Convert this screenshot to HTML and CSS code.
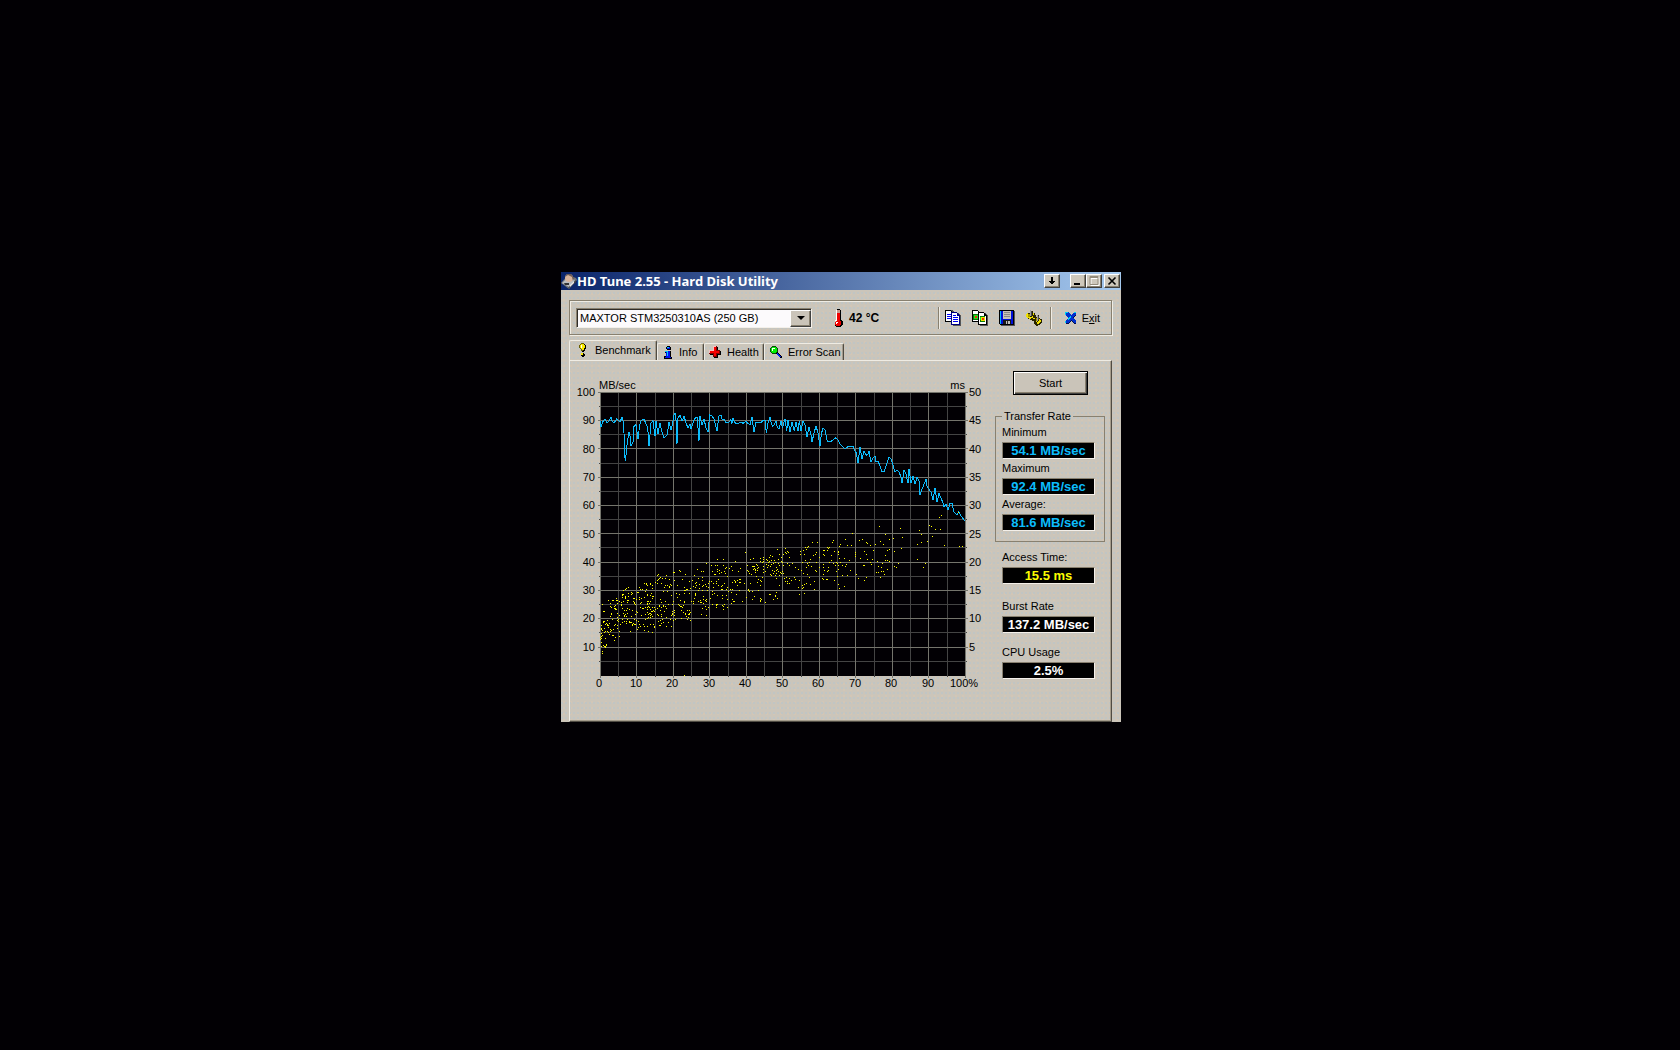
FILE: index.html
```html
<!DOCTYPE html>
<html lang="en">
<head>
<meta charset="utf-8">
<title>HD Tune 2.55 - Hard Disk Utility</title>
<link rel="stylesheet" href="styles.css">
</head>
<body>
<main class="window">
  <header class="titlebar">
    <svg class="app-icon" width="16" height="16" viewBox="0 0 16 16" aria-hidden="true">
      <path d="M0 10 7 2l8 3 1 2-8 9z" fill="#707478"/><path d="M1 10 7 4l7 3-6 7z" fill="#b8bcc0"/>
      <path d="M7 15l8-8v2l-8 7z" fill="#444"/><circle cx="8" cy="5" r="4" fill="#d8b49c"/>
      <path d="M4 4l2-3 4 0 3 4-1 3-1-4-4-2z" fill="#6c5c54"/><path d="M3 10h5v2H4z" fill="#333"/><path d="M9 12l4-4v2l-4 4z" fill="#e8e8e8"/>
    </svg>
    <h1 class="title">HD Tune 2.55 - Hard Disk Utility</h1>
    <button class="caption tray" aria-label="Minimize to tray"><svg width="12" height="10" viewBox="0 0 12 10" shape-rendering="crispEdges"><path d="M5 1h2v4h2v1H8v1H7v1H5V7H4V6H3V5h2z"/></svg></button>
    <button class="caption" aria-label="Minimize"><svg width="12" height="10" viewBox="0 0 12 10"><path d="M2 7h6v2H2z"/></svg></button>
    <button class="caption maximize" aria-label="Maximize" disabled><svg width="12" height="10" viewBox="0 0 12 10"><path d="M3 1.5h8v8H3zM3 2.5h8" stroke="#fff" fill="none"/><path d="M2 .5h8v8H2zM2 1.500h8" stroke="#948c7c" fill="none"/></svg></button>
    <button class="caption" aria-label="Close"><svg width="12" height="10" viewBox="0 0 12 10"><path d="M2.500 1.500l7 7M9.500 1.500l-7 7" stroke="#000" stroke-width="1.600"/></svg></button>
  </header>

  <section class="toolbar" aria-label="Tools">
    <div class="combo">
      <select aria-label="Drive"><option>MAXTOR STM3250310AS (250 GB)</option></select>
      <span class="combo-arrow"></span>
    </div>
    <svg class="thermo" width="10" height="18" viewBox="0 0 10 18" shape-rendering="crispEdges" aria-hidden="true">
      <path d="M4 0h3v1h1v10h1v1h1v4H9v1H8v1H3v-1H2v-1h6v-4H7V1H4z" fill="#000"/>
      <path d="M3 1h2v10H4v1H2v-1h1z" fill="#fff"/><path d="M4 4h3v8h1v4H7v1H3v-1H2v-3h1v-1h1z" fill="#f00000"/>
      <path d="M4 1h3v3H4z" fill="#c89890"/><path d="M3 13h2v1H4v1H3z" fill="#fff"/>
    </svg>
    <span class="temperature">42 °C</span>
    <div class="tools">
      <button class="tool" aria-label="Copy text"><svg width="16" height="16" viewBox="0 0 16 16" shape-rendering="crispEdges"><path d="M1 0h6l3 3v9H1z" fill="#555"/><path d="M0 0h6v1h1v1h1v1h1v9H0z" fill="#000"/><path d="M1 1h5v3h2v7H1z" fill="#fff"/><path d="M2 4h4v1H2zM2 6h5v1H2zM2 8h5v1H2z" fill="#0000f8"/><path d="M8 3h6v1h1v1h1v11H8z" fill="#555"/><path d="M6 2h6v1h1v1h1v1h1v10H6z" fill="#000080"/><path d="M7 3h5v3h2v8H7z" fill="#fff"/><path d="M8 5h3v1H8zM8 7h5v1H8zM8 9h5v1H8zM8 11h5v1H8z" fill="#0000f8"/></svg></button>
      <button class="tool" aria-label="Copy screenshot"><svg width="16" height="16" viewBox="0 0 16 16" shape-rendering="crispEdges"><path d="M0 0h6v1h1v1h1v1h1v9H0z" fill="#000"/><path d="M1 1h5v3h2v7H1z" fill="#fff"/><path d="M1 4h6v6H1z" fill="#087808"/><path d="M2 5h4v4H2z" fill="#20e020"/><path d="M3 6h2v2H3z" fill="#f03000"/><path d="M8 3h6v1h1v1h1v11H8z" fill="#555"/><path d="M6 2h6v1h1v1h1v1h1v10H6z" fill="#000"/><path d="M7 3h5v3h2v8H7z" fill="#fff"/><path d="M8 6h5v6H8z" fill="#087808"/><path d="M9 7h4v4H9z" fill="#f0e000"/><path d="M10 8h2v2h-2z" fill="#f03000"/><path d="M8 7h1v3H8z" fill="#20e020"/></svg></button>
      <button class="tool" aria-label="Save"><svg width="16" height="16" viewBox="0 0 16 16" shape-rendering="crispEdges"><path d="M1 1h15v15H2z" fill="#555"/><path d="M0 0h15v15H1v-1H0z" fill="#000"/><path d="M1 1h1v13H1z" fill="#00b8f8"/><path d="M2 1h12v13H2z" fill="#0010d8"/><path d="M4 1h8v8H4z" fill="#c8c4b8"/><path d="M5 2h6v1H5zM5 4h6v1H5zM5 6h6v1H5z" fill="#888"/><path d="M4 10h8v4H4z" fill="#181818"/><path d="M7 11h4v3H7z" fill="#c0c0c0"/><path d="M8 11h1v3H8z" fill="#333"/></svg></button>
      <button class="tool" aria-label="Options"><svg width="16" height="16" viewBox="0 0 16 16" shape-rendering="crispEdges"><path d="M1 4h1V3h2V1h3v2h2v2h1v2h1V5h2v3h1v1h2v4h-1v1h-1v1h-2v1h-2v-1H9v-1H8v-3H6v-1H4V9H2V8H1z" fill="#282400"/><path d="M0 4h1V3h1v1h1v1H2v1h2v1h2V6h1v2H5v1H3V8H1V7H0zM7 3h1v2H7zM8 8h1v3h1v1h1v2h2v-1h1v-1h1v-2h-1V9h-1v2h-1v1h-1v-1H9V9H7V8z" fill="#f0e000"/><path d="M2 4h2v3H2zM10 8h2v3h-2z" fill="#a89800"/><path d="M4 0h1v6H4zM11 5h1v6h-1z" fill="#a0a0a0"/><path d="M5 1h1v5H5zM12 6h1v4h-1z" fill="#484848"/></svg></button>
      <button class="exit"><svg width="12" height="12" viewBox="0 0 12 12" shape-rendering="crispEdges" aria-hidden="true"><path d="M1 1h2l3 3 3-3h2v2L8 6l3 3v3H9L6 9l-3 3H1V9l3-3-3-3z" fill="#001050"/><path d="M0 0h3l3 3 3-3h2v2L8 5l3 4v2H9L6 8l-3 3H0V9l3-3-3-4z" fill="#0030d0"/><path d="M0 0h3v1H1v2H0zM9 0h2v1H9zM0 9h1v2H0zM2 7l3-3 1 1-3 3z" fill="#00d0f8"/></svg><span>E<u>x</u>it</span></button>
    </div>
  </section>

  <nav class="tabs" role="tablist">
    <button class="tab selected" role="tab" aria-selected="true"><svg width="8" height="14" viewBox="0 0 8 14" shape-rendering="crispEdges"><path d="M2 0h3v1h1v1h1v4H6v2H5v1H3V8H2V6H1V5H0V2h1V1h1z" fill="#686000"/><path d="M5 1h1v1h1v4H6v2H5v1H3V8h1V6h1z" fill="#000"/><path d="M2 1h3v1h1v3H5v2H3V6H2V5H1V2h1z" fill="#f8e800"/><path d="M2 10h3v1h1v2H5v1H3v-1H2z" fill="#000"/><path d="M2 10h2v2H2z" fill="#f8e800"/><path d="M2 2h1v3H2z" fill="#fff"/></svg>Benchmark</button>
    <button class="tab info" role="tab"><svg width="8" height="13" viewBox="0 0 8 13" shape-rendering="crispEdges"><path d="M3 0h3v1h1v3H3V3H2V1h1zM1 5h6v6h1v2H0v-3h2V7H1z" fill="#000"/><path d="M3 1h3v2H3zM1 5h5v6h1v1H1v-1h1V6H1z" fill="#0010f0"/><path d="M3 1h2v1H3zM1 5h3v1H1zM3 6h1v4H3z" fill="#00c8f8"/></svg>Info</button>
    <button class="tab health" role="tab"><svg width="12" height="12" viewBox="0 0 12 12" shape-rendering="crispEdges"><path d="M5 1h4v4h3v4H9v3H5V9H1V5h4z" fill="#000"/><path d="M4 0h4v4h3v4H8v3H4V8H0V4h4z" fill="#800000"/><path d="M5 1h2v4h3v2H7v3H5V7H1V5h4z" fill="#f80000"/><path d="M4 0h3v1H5v4H1v2H0V4h4z" fill="#f8c0c0"/></svg>Health</button>
    <button class="tab scan" role="tab"><svg width="12" height="12" viewBox="0 0 12 12" shape-rendering="crispEdges"><path d="M7 6l5 4v2h-2L6 8z" fill="#000"/><path d="M7 7l4 4h-1L6 8z" fill="#0020f8"/><path d="M2 0h4v1h1v1h1v4H7v1H6v1H2V7H1V6H0V2h1V1h1z" fill="#084808"/><path d="M2 1h4v1h1v4H6v1H2V6H1V2h1z" fill="#00f000"/><path d="M2 2h3v1H3v2H2z" fill="#fff"/></svg>Error Scan</button>
  </nav>

  <section class="panel" role="tabpanel">
    <svg id="chart" class="chart" width="420" height="314" viewBox="0 0 420 314" role="img" aria-label="Transfer rate and access time"></svg>
    <aside class="results">
      <button class="start">Start</button>
      <fieldset class="rates">
        <legend>Transfer Rate</legend>
        <label for="min">Minimum</label><output id="min" class="value rate">54.1 MB/sec</output>
        <label for="max">Maximum</label><output id="max" class="value rate">92.4 MB/sec</output>
        <label for="avg">Average:</label><output id="avg" class="value rate">81.6 MB/sec</output>
      </fieldset>
      <div class="metric access"><label for="acc">Access Time:</label><output id="acc" class="value time">15.5 ms</output></div>
      <div class="metric burst"><label for="bur">Burst Rate</label><output id="bur" class="value">137.2 MB/sec</output></div>
      <div class="metric cpu"><label for="cpu">CPU Usage</label><output id="cpu" class="value">2.5%</output></div>
    </aside>
  </section>
</main>
<script src="chart.js"></script>
</body>
</html>
```
FILE: styles.css
```css
* { box-sizing: border-box; }
body {
  margin: 0;
  padding: 272px 0 0 2px;
  background: #020004;
  font: 11px/14px "Liberation Sans", Arial, sans-serif;
  color: #000;
}
button, select { font: inherit; color: inherit; margin: 0; padding: 0; border: 0; background: none; }
svg { display: block; flex: none; }

.window {
  width: 560px;
  max-width: 100%;
  margin: 0 auto;
  background-color: #cbc5ba;
  background-image:
    radial-gradient(circle at 1px 1px, #c0c5c4 1px, transparent 1px),
    radial-gradient(circle at 3px 4px, #d2c6b6 1px, transparent 1px);
  background-size: 4px 5px, 7px 6px;
}

.titlebar {
  display: flex;
  align-items: center;
  height: 18px;
  padding-right: 1px;
  background: linear-gradient(90deg, #0a246a, #a6caf0);
}
.title {
  flex: 1;
  margin: 0;
  font: bold 13px/18px "Noto Sans", Tahoma, sans-serif;
  color: #fff;
}
.caption {
  display: grid;
  place-items: center;
  width: 16px;
  height: 14px;
  background: #cec8bc;
  border: 1px solid;
  border-color: #fff #404040 #404040 #fff;
  box-shadow: inset -1px -1px #88806f;
}
.tray { margin-right: 10px; }
.maximize { margin-right: 2px; }

.toolbar {
  display: flex;
  align-items: center;
  height: 35px;
  margin: 10px 9px 0 8px;
  padding: 0 8px 0 6px;
  border: 1px solid #88806f;
  box-shadow: inset 1px 1px #efece4, 1px 1px #efece4;
}
.combo {
  display: flex;
  width: 236px;
  height: 20px;
  padding: 1px 0 0 1px;
  background: #fcfafc;
  border: 1px solid;
  border-color: #88806f #f4f0ea #f4f0ea #88806f;
  box-shadow: inset 1px 1px #302c28;
}
.combo select {
  flex: 1;
  appearance: none;
  padding-left: 2px;
}
.combo-arrow {
  display: grid;
  place-items: center;
  width: 21px;
  background: #cac4b9;
  border: 1px solid;
  border-color: #fff #404040 #404040 #fff;
  box-shadow: inset -1px -1px #88806f;
  pointer-events: none;
}
.combo-arrow::before {
  content: "";
  border: 4px solid transparent;
  border-top-color: #000;
  border-bottom: 0;
}
.thermo { margin-left: 21px; }
.temperature { margin-left: 6px; font-size: 12px; font-weight: bold; }
.tools {
  display: flex;
  align-items: center;
  gap: 11px;
  height: 22px;
  margin-left: auto;
  padding-left: 6px;
  border-left: 1px solid #88806f;
  box-shadow: inset 1px 0 #efece4;
}
.exit {
  display: flex;
  align-items: center;
  gap: 5px;
  height: 22px;
  margin-left: -3px;
  padding: 0 3px 0 14px;
  border-left: 1px solid #88806f;
  box-shadow: inset 1px 0 #efece4;
}

.tabs {
  display: flex;
  align-items: flex-end;
  height: 20px;
  margin: 5px 8px 0;
}
.tab {
  display: flex;
  align-items: center;
  gap: 7px;
  height: 17px;
  border: 1px solid #efece4;
  border-right-color: #504c44;
  border-bottom: 0;
  border-radius: 2px 2px 0 0;
  box-shadow: inset -1px 0 #a49c8c;
}
.selected { width: 88px; height: 20px; padding: 0 0 2px 9px; gap: 8px; }
.info { width: 47px; padding-left: 6px; gap: 7px; }
.health { width: 60px; padding-left: 4px; gap: 6px; }
.scan { width: 80px; padding-left: 5px; gap: 6px; }

.panel {
  display: flex;
  height: 362px;
  margin: 0 9px 0 8px;
  border: 1px solid #efece4;
  border-right-color: #504c44;
  border-bottom-color: #504c44;
  box-shadow: inset -1px -1px #a49c8c;
}
.chart { margin: 17px 0 0 1px; }

.results { display: flex; flex-direction: column; flex: 1; padding: 10px 6px 0 4px; }
.start {
  width: 75px;
  height: 24px;
  margin-left: 18px;
  background: #cac4b9;
  border: 1px solid #000;
  box-shadow: inset 1px 1px #fff, inset -1px -1px #404040, inset -2px -2px #88806f;
}
.rates {
  display: flex;
  flex-direction: column;
  min-width: 0;
  margin: 14px 0 0;
  padding: 2px 8px 8px 6px;
  border: 1px solid #88806f;
}
.rates legend { padding: 0 2px; line-height: 14px; }
label { display: block; height: 17px; line-height: 14px; }
.value {
  display: block;
  width: 93px;
  height: 17px;
  margin-bottom: 2px;
  border: 1px solid;
  border-color: #88806f #f4f0ea #f4f0ea #88806f;
  background: #000;
  color: #fff;
  font: bold 13px/15px "Liberation Sans", Arial, sans-serif;
  text-align: center;
}
.rate { color: #0cbcfc; }
.time { color: #fcfc00; }
.metric { padding-left: 7px; }
.access { margin-top: 8px; }
.burst { margin-top: 13px; }
.cpu { margin-top: 10px; }
.chart text { font: 11px "Liberation Sans", Arial, sans-serif; }
.end { text-anchor: end; }
.middle { text-anchor: middle; }
```
FILE: chart.js
```js
const svg = document.getElementById("chart");
const LEFT = 29, TOP = 14, W = 365, H = 283;

function add(tag, attrs, text) {
  const el = document.createElementNS("http://www.w3.org/2000/svg", tag);
  for (const k in attrs) el.setAttribute(k, attrs[k]);
  if (text !== undefined) el.textContent = text;
  svg.appendChild(el);
}
function rect(x, y, width, height, fill) { add("rect", { x, y, width, height, fill }); }

rect(LEFT, TOP, W + 1, H + 1, "#020004");
// Minor lines first so that the major ones lie on top
for (const major of [0, 1]) {
  const color = major ? "#74746c" : "#444444";
  for (let i = 0; i <= 20; i++) {
    if ((i % 2 === 0) !== !!major) continue;
    const x = LEFT + Math.round(i * W / 20 - 0.1);
    const y = TOP + Math.floor(i * H / 20 + 0.3);
    rect(x, TOP, 1, H + 1 + (major ? 2 : 1), color);
    if (i < 20) rect(LEFT - 1 - major, y, W + 3 + 2 * major, 1, color);
  }
}
add("text", { x: 28, y: 11 }, "MB/sec");
add("text", { x: 394, y: 11, class: "end" }, "ms");
for (let i = 0; i <= 10; i++) {
  const y = TOP + Math.round(i * H / 10) + 4;
  if (i < 10) {
    add("text", { x: 24, y, class: "end" }, 100 - 10 * i);
    add("text", { x: 398, y }, 50 - 5 * i);
  }
  add("text", { x: LEFT - 1 + Math.round(i * W / 10), y: 309, class: "middle" }, i === 10 ? "100%" : 10 * i);
}

// Access times: [percent, lowest, highest, samples up to the next row]
const bands = [
  [0, 6, 22, 14], [0.5, 10, 25, 22], [2, 12, 29, 26], [4, 13, 30, 28], [6, 15, 31, 62], [10, 15, 33, 80], [15, 17, 36, 62],
  [20, 19, 37, 50], [25, 21, 38, 48], [30, 23, 39, 52], [35, 25, 41, 28], [40, 26, 42, 36], [44, 26, 42, 0]
];
let seed = 2550;
function random() { seed = (seed * 16807) % 2147483647; return seed / 2147483647; }
for (let b = 0; b < bands.length - 1; b++) {
  const [x0, lo, hi, n] = bands[b];
  const x1 = bands[b + 1][0];
  for (let i = 0; i < n; i++) {
    const p = x0 + (x1 - x0) * random();
    const v = lo + (hi - lo) * random();
    rect(LEFT + Math.round(p * W / 100), TOP + H - Math.round(v * H / 100), 1, 1, "#fcfc00");
  }
}
// Samples of the second half, in thirds of a pixel
const samples = `358,19 421,25 508,16 515,19 526,28 541,28 478,31 277,40 376,43 484,43 517,49 427,52 400,55 388,58 256,58
307,58 298,61 220,61 361,64 157,67 172,67 217,67 319,67 323,70 346,73 472,73 484,67 502,64 553,76 598,79 607,79 370,73
332,76 262,76 274,76 241,73 238,79 145,79 136,82 142,82 202,82 208,82 205,85 76,85 52,88 190,91 193,91 202,91 223,94 235,94
235,98 286,97 121,94 130,91 139,88 82,94 85,97 79,100 76,97 70,103 31,106 37,109 28,112 10,112 10,118 19,118 58,103
121,103 133,103 169,97 166,103 190,103 193,106 235,103 286,103 286,109 319,103 376,106 382,91 388,88 403,94 424,85
88,112 64,112 10,124 22,122 28,124 34,122 43,121 55,118 64,124 67,127 82,130 88,136 97,130 106,142 115,148 46,127
7,127 1,124 25,127 19,133 25,136 34,133 40,130 55,130 58,136 70,136 22,142 31,139 49,142 52,148 10,139 10,148
37,151 43,154 49,151 55,154 61,157 67,154 70,160 31,163 40,160 49,160 46,166 58,166 64,160 34,166 73,175 79,172
88,175 94,181 103,172 106,178 76,184 82,184 82,190 88,190 115,202 127,198 130,202 133,193 139,190 151,193 163,184
148,172 142,163 130,160 124,151 139,142 145,136 154,139 169,127 166,151 169,154 178,142 190,133 190,142 193,151
190,163 190,178 199,178 202,178 187,175 202,154 205,142 205,151 208,127 214,121 220,130 226,136 229,127 232,130
235,136 235,148 229,154 232,169 223,181 235,193 238,205 253,199 247,166 262,166 271,151 256,139 259,133 247,136
241,127 238,115 253,115 268,121 289,163 295,175 310,136 313,136 331,127 334,133 319,172 313,181 322,118 337,118
352,124 355,139 364,142 367,130 349,157 355,157 364,154 370,154 361,172 373,163 382,148 376,121 382,121 388,124
403,139 409,142 415,130 472,118 490,142 496,130 118,223 133,220 163,208 28,223 31,223 46,226 46,229 49,217 40,238
52,235 1,235 4,238 1,241 16,247 4,184 7,172 10,157 16,154 58,196 49,175 127,205 118,181 151,118 160,106 148,127
127,127 136,121 142,130 178,112 214,106 301,115 313,94 340,91`;
for (const s of samples.trim().split(/\s+/)) {
  const [x, y] = s.split(",").map(Number);
  rect(LEFT + Math.floor((x + 479) / 3), TOP + Math.floor((y + 383) / 3), 1, 1, "#fcfc00");
}
// Isolated samples at the edges of the band
const outliers = [[84, 283], [339, 125], [341, 123], [145, 160], [106, 171], [117, 167], [123, 167], [58, 182]];
for (const [x, y] of outliers) rect(LEFT + x, TOP + y, 1, 1, "#fcfc00");

// Transfer rate curve: both halves in thirds of a pixel
const first = `121,168 124,187 127,178 131,168 136,163 142,176 148,170 154,157 157,170 163,175 171,163 175,165 181,172
187,157 190,170 193,205 194,260 197,289 199,270 202,240 208,203 211,215 214,244 220,232 223,185 229,180 235,223 240,180
244,168 253,163 259,178 264,190 268,244 271,210 274,175 280,168 286,215 289,170 295,208 301,175 306,200 313,221 322,212
328,173 334,196 340,170 343,152 346,145 349,165 352,238 355,160 361,151 367,170 373,154 379,175 385,190 391,178 394,192
403,166 409,157 412,157 415,190 418,229 421,154 427,181 433,163 439,190 445,202 450,151 457,153 463,163 472,199 478,154
484,151 487,163 493,163 498,172 508,172 514,165 516,178 520,160 524,172 532,178 545,172 550,176 558,170 571,181 577,157
583,202 589,172 598,172 604,175 610,166 616,166 620,206 625,175`;
const second = `31,156 34,172 38,185 43,181 49,168 53,187 58,193 64,168 68,190 76,163 81,199 85,166 91,202 97,172 104,199
109,172 115,199 119,168 124,199 130,169 136,180 142,217 148,187 153,205 157,232 163,205 169,184 175,205 181,244 185,208
190,190 196,196 203,229 211,232 220,226 229,219 235,226 241,238 256,253 268,244 280,244 284,256 290,265 295,295 301,247
307,283 313,259 319,272 325,268 328,259 334,292 340,280 346,274 349,292 355,289 361,304 367,321 373,322 379,304 388,278
394,283 400,301 406,322 412,316 418,322 424,337 427,355 433,317 439,328 445,355 448,313 454,355 460,335 466,358 472,338
478,348 481,391 487,374 493,358 499,344 502,364 508,374 514,382 520,406 526,370 532,412 538,386 544,400 550,415 553,427
559,418 565,436 571,416 577,416 583,441 592,451 597,442 604,454 610,461 615,470`;
const path = (data, shift) => data.trim().split(/\s+/).map(s => {
  const [x, y] = s.split(",").map(Number);
  return (LEFT + (x + shift) / 3).toFixed(1) + "," + (TOP + (y - 82) / 3).toFixed(1);
}).join(" ");
add("polyline", { points: path(first, -121) + " " + path(second, 479), fill: "none", stroke: "#0cbcfc", "stroke-width": 1, "shape-rendering": "crispEdges" });
rect(LEFT + 358, TOP + 120, 1, 1, "#fcfc00");
```
